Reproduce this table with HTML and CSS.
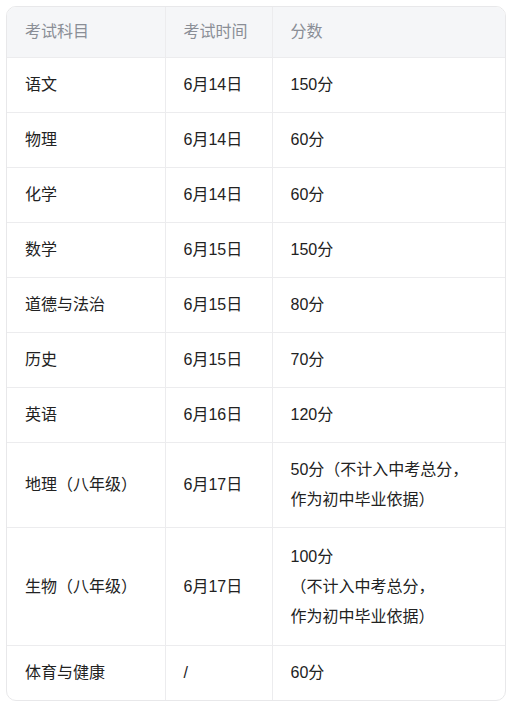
FILE: index.html
```html
<!DOCTYPE html>
<html lang="zh-CN">
<head>
<meta charset="utf-8">
<link rel="stylesheet" href="styles.css">
</head>
<body>
<div class="wrap">
<table class="exam">
<colgroup><col class="c1"><col class="c2"><col class="c3"></colgroup>
<thead>
<tr><th>考试科目</th><th>考试时间</th><th>分数</th></tr>
</thead>
<tbody>
<tr><td>语文</td><td>6月14日</td><td>150分</td></tr>
<tr><td>物理</td><td>6月14日</td><td>60分</td></tr>
<tr><td>化学</td><td>6月14日</td><td>60分</td></tr>
<tr><td>数学</td><td>6月15日</td><td>150分</td></tr>
<tr><td>道德与法治</td><td>6月15日</td><td>80分</td></tr>
<tr><td>历史</td><td>6月15日</td><td>70分</td></tr>
<tr><td>英语</td><td>6月16日</td><td>120分</td></tr>
<tr><td>地理（八年级）</td><td>6月17日</td><td>50分（不计入中考总分，<br>作为初中毕业依据）</td></tr>
<tr><td>生物（八年级）</td><td>6月17日</td><td class="tall">100分<br>（不计入中考总分，<br>作为初中毕业依据）</td></tr>
<tr><td>体育与健康</td><td>/</td><td>60分</td></tr>
</tbody>
</table>
</div>
</body>
</html>
```
FILE: styles.css
```css
html, body {
  margin: 0;
  padding: 0;
  background: #ffffff;
}
body {
  font-family: "Liberation Sans", "Noto Sans CJK SC", sans-serif;
  font-size: 16px;
  color: #222222;
}
.wrap {
  width: 498px;
  margin: 6px 0 0 6px;
  border: 1px solid #e8e8ea;
  border-radius: 10px;
  overflow: hidden;
}
.exam {
  width: 100%;
  border-collapse: collapse;
  table-layout: fixed;
}
.c1 { width: 158px; }
.c2 { width: 107px; }
.exam th, .exam td {
  text-align: left;
  vertical-align: middle;
  padding: 12px 18px;
  line-height: 30px;
  border-left: 1px solid #ececee;
  border-top: 1px solid #ececee;
}
.exam td.tall {
  padding-top: 14px;
  padding-bottom: 13px;
}
.exam tr > :first-child { border-left: none; }
.exam thead th {
  border-top: none;
  background: #f5f6f8;
  color: #8a8e96;
  font-weight: normal;
  padding-top: 10px;
  padding-bottom: 10px;
}
```
